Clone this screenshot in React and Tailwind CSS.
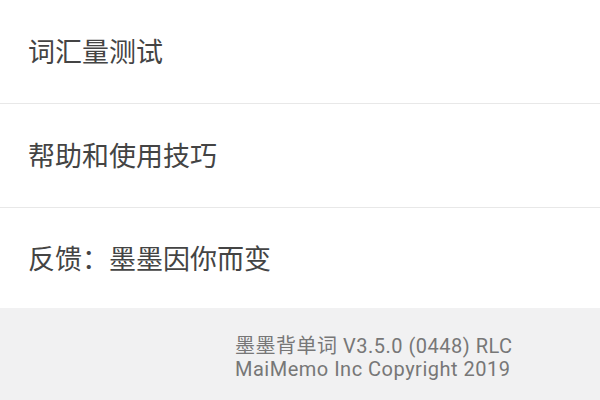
import React from "react";

const items = [
  { label: "词汇量测试", h: "h-[104px] border-b" },
  { label: "帮助和使用技巧", h: "h-[104px] border-b" },
  { label: "反馈：墨墨因你而变", h: "h-[100px]" },
];

const App = () => {
  return (
    <div className="w-[600px] h-[400px] overflow-hidden bg-[#f1f1f2] font-['Roboto','Noto_Sans_CJK_SC',sans-serif]">
      <div className="bg-white">
        {items.map((item) => (
          <div
            key={item.label}
            className={`${item.h} border-[#e8e8e8] flex items-center pl-7 pt-1 text-[27px] text-[#444]`}
          >
            {item.label}
          </div>
        ))}
      </div>
      <div className="pl-[235px] pt-[27px] text-[20px] leading-[23px] tracking-[0.5px] text-[#777]">
        <div>墨墨背单词 V3.5.0 (0448) RLC</div>
        <div>MaiMemo Inc Copyright 2019</div>
      </div>
    </div>
  );
};

export default App;
